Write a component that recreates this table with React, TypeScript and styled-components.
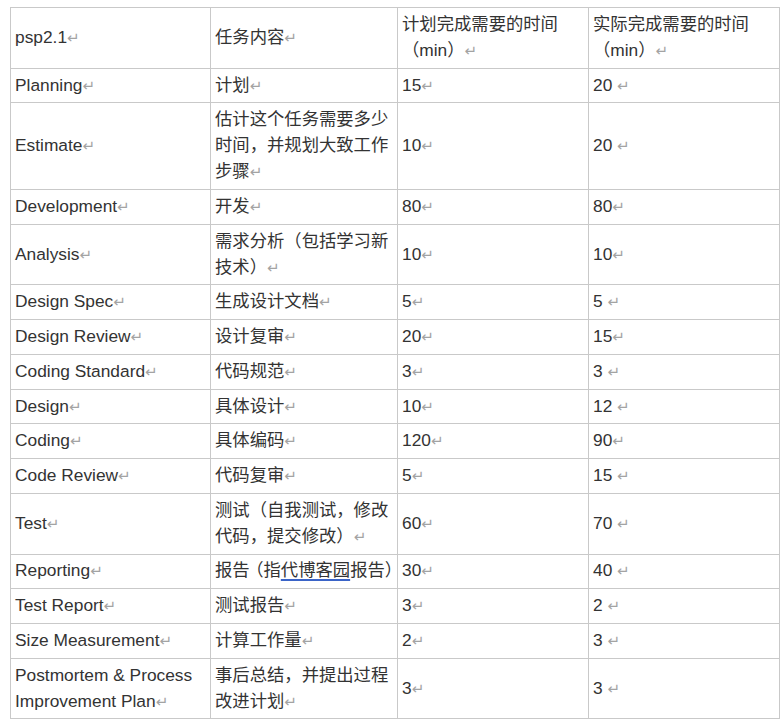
import React from "react";
import styled, { createGlobalStyle } from "styled-components";

const GlobalStyle = createGlobalStyle`
  html, body { margin: 0; padding: 0; background: #ffffff; }
  body {
    font-family: "Liberation Sans", Arial, "Noto Sans CJK SC", sans-serif;
    color: #333333;
  }
`;

const Page = styled.div`
  padding: 7px 0 0 10px;
`;

const Table = styled.table`
  border-collapse: collapse;
  table-layout: fixed;
  width: 769px;
  font-size: 17.33px;
  line-height: 25.95px;
`;

const Col = styled.col<{ $w: number }>`
  width: ${(p) => p.$w}px;
`;

const Cell = styled.td<{ $clip?: boolean }>`
  border: 1px solid #c9c9c9;
  padding: 3.9px 4px 3.9px 4px;
  vertical-align: middle;
  text-align: left;
  color: #333333;
  font-family: "Liberation Sans", Arial, "Noto Sans CJK SC", sans-serif;
  white-space: ${(p) => (p.$clip ? "nowrap" : "normal")};
  overflow: ${(p) => (p.$clip ? "hidden" : "visible")};
`;

const Mark = styled.span`
  font-family: "DejaVu Sans", sans-serif;
  font-size: 15px;
  line-height: 1;
  color: #a3a3a3;
`;

const Narrow = styled.span`
  display: inline-block;
  margin-left: -3.5px;
`;

const Linked = styled.span`
  text-decoration: underline;
  text-decoration-color: #3a64c8;
  text-decoration-thickness: 1.5px;
  text-underline-offset: 3px;
`;

type Content = string | string[];

type Row = [Content, Content, Content, Content];

const rows: Row[] = [
  ["psp2.1", "任务内容", ["计划完成需要的时间", "（min）"], ["实际完成需要的时间", "（min）"]],
  ["Planning", "计划", "15", "20 "],
  ["Estimate", ["估计这个任务需要多少", "时间，并规划大致工作", "步骤"], "10", "20 "],
  ["Development", "开发", "80", "80"],
  ["Analysis", ["需求分析（包括学习新", "技术）"], "10", "10"],
  ["Design Spec", "生成设计文档", "5", "5 "],
  ["Design Review", "设计复审", "20", "15"],
  ["Coding Standard", "代码规范", "3", "3 "],
  ["Design", "具体设计", "10", "12 "],
  ["Coding", "具体编码", "120", "90"],
  ["Code Review", "代码复审", "5", "15 "],
  ["Test", ["测试（自我测试，修改", "代码，提交修改）"], "60", "70 "],
  ["Reporting", "__REPORT__", "30", "40 "],
  ["Test Report", "测试报告", "3", "2 "],
  ["Size Measurement", "计算工作量", "2", "3 "],
  ["Postmortem & Process Improvement Plan", ["事后总结，并提出过程", "改进计划"], "3", "3 "],
];

function renderContent(c: Content): React.ReactNode {
  const lines = Array.isArray(c) ? c : [c];
  return lines.map((line, i) => (
    <React.Fragment key={i}>
      {line}
      {i < lines.length - 1 ? <br /> : <Mark>↵</Mark>}
    </React.Fragment>
  ));
}

function CellContent({ c }: { c: Content }) {
  if (c === "__REPORT__") {
    return (
      <>
        报告<Narrow>（</Narrow>指<Linked>代博客园</Linked>报告）<Mark>↵</Mark>
      </>
    );
  }
  return <>{renderContent(c)}</>;
}

export default function App() {
  return (
    <>
      <GlobalStyle />
      <Page>
        <Table>
          <colgroup>
            <Col $w={200} />
            <Col $w={187} />
            <Col $w={191} />
            <Col $w={191} />
          </colgroup>
          <tbody>
            {rows.map((r, i) => (
              <tr key={i}>
                {r.map((c, j) => (
                  <Cell key={j} $clip={c === "__REPORT__"}>
                    <CellContent c={c} />
                  </Cell>
                ))}
              </tr>
            ))}
          </tbody>
        </Table>
      </Page>
    </>
  );
}
